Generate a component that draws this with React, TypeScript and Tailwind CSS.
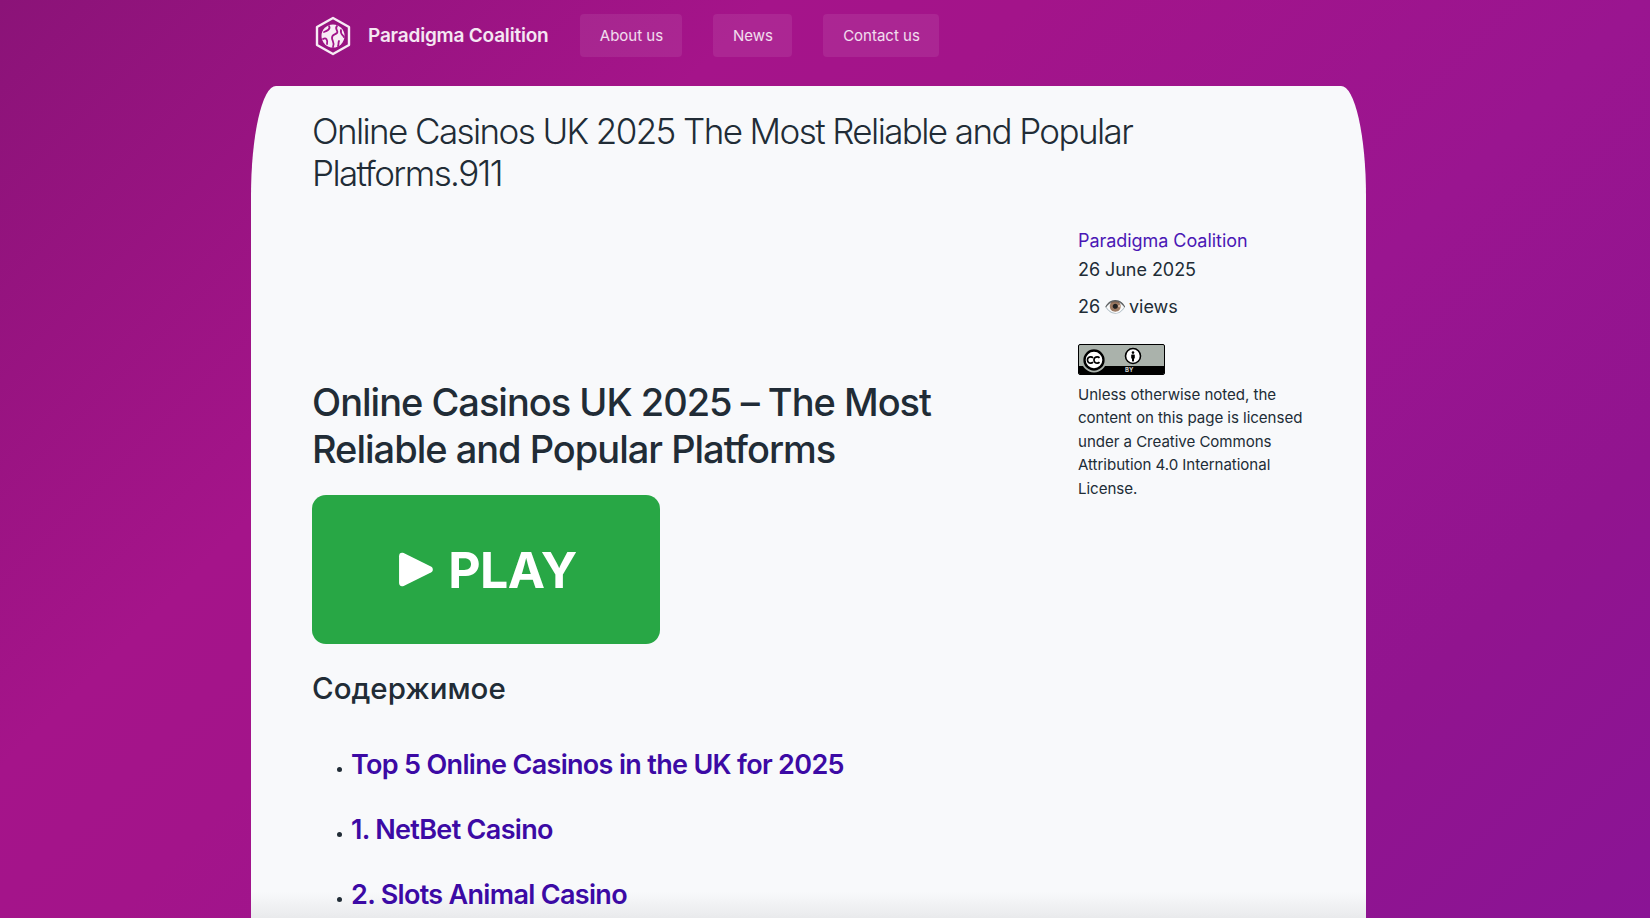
function Logo() {
  return (
    <svg width="38" height="40" viewBox="0 0 38 40" fill="none">
      <path d="M19 2 L35 11 V29 L19 38 L3 29 V11 Z" stroke="#fff" strokeWidth="2.4" strokeLinejoin="round" opacity="0.92" />
      <circle cx="19" cy="20" r="11.5" fill="#fff" opacity="0.92" />
      <path d="M15 10 C17 13 13 15 10 16 M23 10 C20 13 25 15 23 17 C21 19 18 18 18 22 C18 25 21 26 19 31 M9 23 C12 21 14 24 13 28 M27 14 C26 18 29 19 30 21 M25 25 C24 27 25 28 24 30" stroke="#a1148a" strokeWidth="1.8" strokeLinecap="round" />
    </svg>
  );
}

function CcBadge() {
  return (
    <div className="relative flex h-[31px] w-[87px] flex-col overflow-hidden rounded-[2px] border border-black bg-[#aab2ab]">
      <svg width="85" height="29" viewBox="0 0 85 29" className="absolute left-0 top-0">
        <rect x="0" y="21" width="85" height="8" fill="#000" />
        <circle cx="15" cy="15" r="11.5" fill="#fff" stroke="#aab2ab" strokeWidth="2" />
        <circle cx="15" cy="15" r="9.5" fill="#fff" stroke="#000" strokeWidth="2.4" />
        <path d="M14 12.8 A3.2 3.2 0 1 0 14 17.2 M20.5 12.8 A3.2 3.2 0 1 0 20.5 17.2" stroke="#000" strokeWidth="1.7" fill="none" />
        <circle cx="54" cy="11" r="7.5" fill="#fff" stroke="#000" strokeWidth="1.6" />
        <circle cx="54" cy="7.6" r="1.3" fill="#000" />
        <rect x="52.2" y="9.4" width="3.6" height="4.2" rx="0.6" fill="#000" />
        <rect x="53" y="13" width="2" height="3.4" fill="#000" />
      </svg>
      <span className="absolute bottom-[0px] left-[46px] text-[6px] font-bold leading-[8px] text-[#cfcfcf]">BY</span>
    </div>
  );
}

const links = ["Top 5 Online Casinos in the UK for 2025", "1. NetBet Casino", "2. Slots Animal Casino"];

export default function App() {
  return (
    <div
      className="h-[918px] overflow-hidden bg-[linear-gradient(135deg,#8b1378_0%,#a5148a_30%,#a3148a_40%,#9a1590_64%,#91148f_82%,#8a1495_100%)] font-['Inter',sans-serif] text-[#212c36]"
    >
      <header className="ml-[314px] flex h-[86px] items-start pt-[14px]">
        <div className="mr-[32px] flex h-[43px] items-center gap-[16px] text-[19px] font-semibold tracking-[-0.2px] text-white/90">
          <Logo />
          <span className="pt-[2px]">Paradigma Coalition</span>
        </div>
        <nav className="flex gap-[31px] text-[15px] text-white/85">
          <a className="flex h-[43px] w-[102px] items-center justify-center rounded-[4px] bg-white/8 pt-[1px]">About us</a>
          <a className="flex h-[43px] w-[79px] items-center justify-center rounded-[4px] bg-white/8 pt-[1px]">News</a>
          <a className="flex h-[43px] w-[116px] items-center justify-center rounded-[4px] bg-white/8 pt-[1px]">Contact us</a>
        </nav>
      </header>
      <main className="relative ml-[251px] h-[832px] w-[1115px] overflow-hidden rounded-tl-[25px_110px] rounded-tr-[25px_110px] bg-[linear-gradient(to_bottom,#f8f9fb_calc(100%-26px),#e9eaec_100%)] pl-[61px]">
        <h1 className="w-[840px] pt-[24px] text-[35px] font-light leading-[42px] tracking-[-1.6px]">
          Online Casinos UK 2025 The Most Reliable and Popular Platforms.911
        </h1>
        <div className="flex">
          <article className="w-[766px] pt-[185px]">
            <h2 className="w-[660px] text-[38px] font-medium leading-[47px] tracking-[-1px]">
              Online Casinos UK 2025 – The Most Reliable and Popular Platforms
            </h2>
            <a className="mt-[22px] flex h-[149px] w-[348px] items-center justify-center gap-[14px] rounded-[14px] bg-[#28a745] pl-[2px] text-white">
              <svg width="37" height="35" viewBox="0 0 36 34" fill="#fff"><path d="M2 4 C2 1 4 0 6.500 1 L33 14 C35.500 15.300 35.500 18.700 33 20 L6.500 33 C4 34 2 33 2 30 Z" /></svg>
              <span className="text-[50px] font-bold leading-none tracking-[-0.5px]">PLAY</span>
            </a>
            <h3 className="mt-[24px] text-[29.500px] font-medium leading-[40px]">Содержимое</h3>
            <ul className="mt-[36px] flex flex-col gap-[23px] pl-[39px]">
              {links.map((t) => (
                <li key={t} className="relative text-[27px] font-semibold leading-[42px] tracking-[-0.68px] text-[#3c0aa5]">
                  <span className="absolute left-[-14px] top-[23px] h-[5px] w-[5px] rounded-full bg-[#212c36]" />
                  {t}
                </li>
              ))}
            </ul>
          </article>
          <aside className="pt-[32px] text-[18px] tracking-[-0.05px]">
            <a className="block leading-[30px] text-[#4a17b5]">Paradigma Coalition</a>
            <p className="-mt-[1px] leading-[29px]">26 June 2025</p>
            <p className="mt-[8px] leading-[29px] [word-spacing:-1.5px]">26 👁️ views</p>
            <div className="mt-[23px]"><CcBadge /></div>
            <p className="mt-[8px] w-[240px] text-[15.100px] leading-[23.400px]">
              Unless otherwise noted, the content on this page is licensed under a Creative Commons Attribution 4.0 International License.
            </p>
          </aside>
        </div>
      </main>
    </div>
  );
}
